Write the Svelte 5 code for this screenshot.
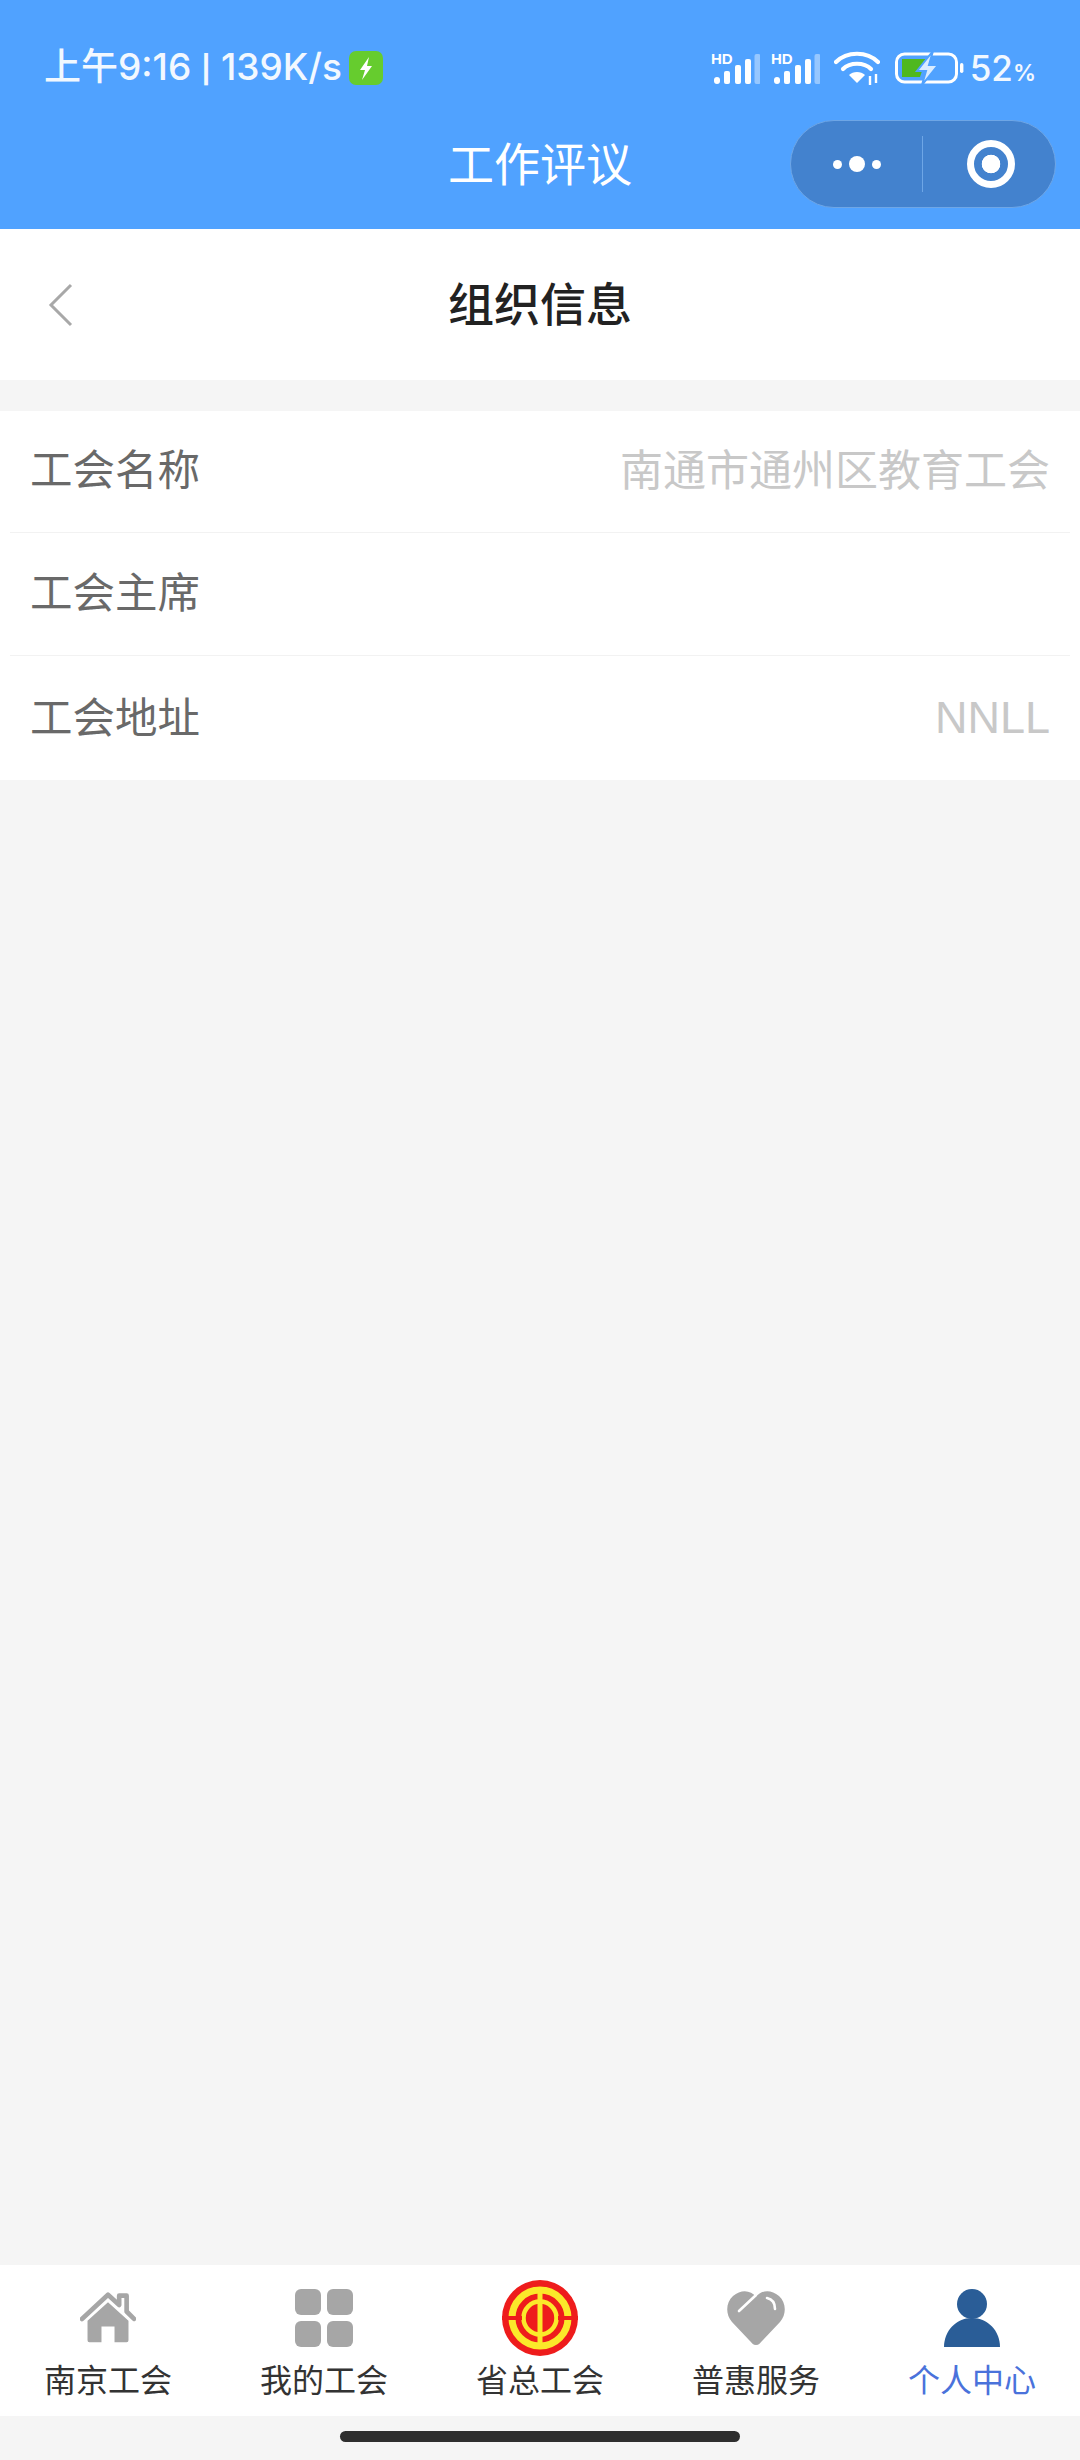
<script>
  const rows = [
    { label: '工会名称', value: '南通市通州区教育工会', latin: false },
    { label: '工会主席', value: '', latin: false },
    { label: '工会地址', value: 'NNLL', latin: true }
  ];
  const tabs = ['南京工会', '我的工会', '省总工会', '普惠服务', '个人中心'];
</script>

<div class="page">
  <header class="head">
    <div class="status">
      <div class="status-left">
        <span class="clock">上午9:16 <span class="pipe">|</span> 139K/s</span>
        <svg class="bolt" width="34" height="34" viewBox="0 0 34 34">
          <rect width="34" height="34" rx="7" fill="#66cc2e"/>
          <path d="M20 6 L11 19 H16 L13 29 L23 15 H18 Z" fill="#fff"/>
        </svg>
      </div>
      <div class="status-right">
        {#each [0, 1] as s}
          <svg class="sig" width="50" height="36" viewBox="0 -2 50 36">
            <text x="1" y="12" class="hd">HD</text>
            <rect x="4" y="25" width="6" height="7" rx="3" fill="#fff"/>
            <rect x="14" y="19" width="6" height="13" rx="2" fill="#fff"/>
            <rect x="25" y="13" width="6" height="19" rx="2" fill="#fff"/>
            <rect x="35" y="7" width="6" height="25" rx="2" fill="#fff"/>
            <rect x="44.5" y="2" width="6" height="30" rx="2" fill="#fff" opacity="0.4"/>
          </svg>
        {/each}
        <svg class="wifi" width="46" height="34" viewBox="0 0 46 34">
          <g fill="none" stroke="#fff" stroke-width="4.2" stroke-linecap="round">
            <path d="M2 11 C13 0 33 0 44 11"/>
            <path d="M9 18 C16 11 30 11 37 18"/>
          </g>
          <path d="M15 24 C19 20 27 20 31 24 L23 32 Z" fill="#fff"/>
          <path d="M36 34 V25 M42 23 V32" stroke="#fff" stroke-width="2.4"/>
        </svg>
        <svg class="batt" width="70" height="34" viewBox="0 0 70 34">
          <rect x="1.5" y="3" width="60" height="28" rx="8" fill="none" stroke="#fff" stroke-width="3"/>
          <path d="M7 8 H31 L25 26 H7 Z" fill="#4fb81f"/>
          <path d="M38 0 L22 20 H31 L27 34 L43 14 H34 Z" fill="#d9ecff" stroke="#50a2ff" stroke-width="2"/>
          <rect x="65" y="12" width="3.4" height="10" rx="1.7" fill="#fff"/>
        </svg>
        <span class="pct">52<small>%</small></span>
      </div>
    </div>
    <div class="titlebar">
      <h1 class="wx-title">工作评议</h1>
      <div class="capsule">
        <div class="dots"><i></i><b></b><i></i></div>
        <span class="cap-div"></span>
        <div class="ring"></div>
      </div>
    </div>
  </header>

  <nav class="nav">
    <svg class="chev" width="26" height="44" viewBox="0 0 26 44">
      <path d="M23 2 L3 22 L23 42" fill="none" stroke="#a8a8a8" stroke-width="3"/>
    </svg>
    <h2>组织信息</h2>
  </nav>

  <section class="list">
    {#each rows as r}
      <div class="row">
        <span class="label">{r.label}</span>
        <span class="value" class:latin={r.latin}>{r.value}</span>
      </div>
    {/each}
  </section>

  <div class="spacer"></div>

  <footer class="tabs">
    {#each tabs as t, i}
      <div class="tab" class:on={i === 4}>
        <div class="ic">
          {#if i === 0}
            <svg width="56" height="54" viewBox="0 0 60 58">
              <path d="M2 30 L30 4 L42 15 V5 H50 V22 L58 30" fill="none" stroke="#a6a6a6" stroke-width="5" stroke-linejoin="round" stroke-linecap="round"/>
              <path d="M30 12 L52 32 V53 a2 2 0 0 1 -2 2 H37 V38 H23 V55 H10 a2 2 0 0 1 -2 -2 V32 Z" fill="#a6a6a6"/>
            </svg>
          {:else if i === 1}
            <svg width="58" height="58" viewBox="0 0 58 58">
              <rect x="0" y="0" width="26" height="26" rx="6" fill="#a6a6a6"/>
              <rect x="32" y="0" width="26" height="26" rx="6" fill="#a6a6a6"/>
              <rect x="0" y="32" width="26" height="26" rx="6" fill="#a6a6a6"/>
              <rect x="32" y="32" width="26" height="26" rx="6" fill="#a6a6a6"/>
            </svg>
          {:else if i === 2}
            <svg width="76" height="76" viewBox="0 0 76 76">
              <circle cx="38" cy="38" r="38" fill="#ee1c1c"/>
              <g fill="none" stroke="#fbe92a">
                <circle cx="38" cy="38" r="28" stroke-width="7"/>
                <circle cx="38" cy="38" r="16.5" stroke-width="4.5"/>
              </g>
              <path d="M0 36 H20 V40 H0 Z M56 36 H76 V40 H56 Z" fill="#ee1c1c"/>
              <rect x="35.5" y="7" width="5" height="62" fill="#fbe92a"/>
            </svg>
          {:else if i === 3}
            <svg width="58" height="54" viewBox="0 0 58 54">
              <path d="M29 54 C26 54 25 52 22 49 L5 31 C-2 23 -1 11 6 5 C14 -2 24 -1 29 6 C34 -1 44 -2 52 5 C59 11 60 23 53 31 L36 49 C33 52 32 54 29 54 Z" fill="#a6a6a6"/>
              <path d="M12 20 L28 5" stroke="#fff" stroke-width="2.6" stroke-linecap="round"/>
              <path d="M40 7 C45 8 48 12 48 18" fill="none" stroke="#fff" stroke-width="2.6" stroke-linecap="round"/>
            </svg>
          {:else}
            <svg width="56" height="58" viewBox="0 0 56 58">
              <circle cx="28" cy="15" r="15" fill="#2a5d97"/>
              <path d="M0 58 C0 42 12 29 28 29 C44 29 56 42 56 58 Z" fill="#2a5d97"/>
            </svg>
          {/if}
        </div>
        <span class="tab-label">{t}</span>
      </div>
    {/each}
  </footer>

  <div class="home-area"><span class="home"></span></div>
</div>

<style>
  :global(body) {
    margin: 0;
    background: #f5f5f5;
    font-family: "Noto Sans CJK SC", "Noto Sans", sans-serif;
  }
  .page {
    width: 1080px;
    height: 2460px;
    display: flex;
    flex-direction: column;
    background: #f5f5f5;
    overflow: hidden;
  }
  .head {
    height: 229px;
    background: #50a2ff;
    color: #fff;
    display: flex;
    flex-direction: column;
  }
  .status {
    height: 121px;
    box-sizing: border-box;
    padding: 46px 44px 0 44px;
    display: flex;
    justify-content: space-between;
    align-items: flex-start;
  }
  .status-left {
    display: flex;
    align-items: center;
    gap: 7px;
    height: 44px;
  }
  .clock {
    font-family: Inter, "Noto Sans CJK SC", sans-serif;
    font-size: 37px;
    font-weight: 500;
    line-height: 44px;
    color: #f2f8ff;
  }
  .pipe {
    font-size: 27px;
    font-weight: 700;
    vertical-align: 1px;
  }
  .status-right {
    display: flex;
    align-items: center;
    height: 44px;
  }
  .sig + .sig { margin-left: 10px; }
  .hd {
    font-family: "Liberation Sans", sans-serif;
    font-size: 15px;
    font-weight: 700;
    fill: #fff;
  }
  .wifi { margin-left: 14px; }
  .batt { margin-left: 15px; }
  .pct {
    font-family: Inter, sans-serif;
    font-size: 35px;
    font-weight: 500;
    line-height: 44px;
    color: #f2f8ff;
    margin-left: 5px;
    padding-top: 5px;
  }
  .pct small { font-size: 23px; font-weight: 600; }
  .titlebar {
    position: relative;
    flex: 1;
    display: flex;
    align-items: flex-start;
    justify-content: center;
  }
  .wx-title {
    margin: 7px 0 0 0;
    font-size: 46px;
    line-height: 66px;
    font-weight: 400;
  }
  .capsule {
    position: absolute;
    top: -1px;
    right: 24px;
    width: 266px;
    height: 88px;
    box-sizing: border-box;
    border: 1px solid #6ea6e6;
    border-radius: 44px;
    background: #4382ce;
    display: flex;
    align-items: center;
  }
  .dots {
    width: 131px;
    display: flex;
    justify-content: center;
    align-items: center;
    gap: 7px;
  }
  .dots i { width: 9px; height: 9px; border-radius: 50%; background: #fff; }
  .dots b { width: 16px; height: 16px; border-radius: 50%; background: #fff; }
  .cap-div { width: 1px; height: 56px; background: #6ea6e6; }
  .ring {
    width: 48px;
    height: 48px;
    box-sizing: border-box;
    margin-left: 44px;
    border: 7px solid #fff;
    border-radius: 50%;
    background: radial-gradient(circle, #fff 0, #fff 9px, transparent 9.6px);
  }
  .nav {
    position: relative;
    height: 151px;
    box-sizing: border-box;
    padding-bottom: 7px;
    background: #fff;
    display: flex;
    align-items: center;
    justify-content: center;
  }
  .nav h2 {
    margin: 0;
    font-size: 46px;
    font-weight: 500;
    color: #222;
    line-height: 66px;
  }
  .chev { position: absolute; left: 48px; top: 54px; }
  .list {
    margin-top: 31px;
    background: #fff;
    box-sizing: border-box;
    height: 369px;
    padding: 0 10px;
  }
  .row {
    height: 122px;
    box-sizing: border-box;
    border-bottom: 1px solid #f2f2f2;
    padding: 0 20px 10px 20px;
    display: flex;
    justify-content: space-between;
    align-items: center;
    font-size: 42.5px;
  }
  .row:nth-child(2) { height: 123px; }
  .row:last-child { border-bottom: 0; height: 124px; padding-bottom: 7px; }
  .label { color: #696969; }
  .value {
    color: #c8c8c8;
    font-size: 43px;
  }
  .value.latin {
    font-family: "Liberation Sans", sans-serif;
    font-size: 45px;
    padding-top: 6px;
  }
  .spacer { flex: 1; }
  .tabs {
    height: 151px;
    background: #fff;
    display: flex;
  }
  .tab {
    flex: 1;
    display: flex;
    flex-direction: column;
    align-items: center;
  }
  .ic {
    height: 106px;
    flex: none;
    display: flex;
    align-items: center;
    justify-content: center;
  }
  .tab-label {
    margin-top: -13px;
    font-size: 32px;
    line-height: 40px;
    color: #333;
  }
  .tab.on .tab-label { color: #4a72db; }
  .home-area {
    height: 44px;
    display: flex;
    justify-content: center;
    padding-top: 15px;
    box-sizing: border-box;
  }
  .home {
    width: 400px;
    height: 11px;
    border-radius: 6px;
    background: #2e2e2e;
  }
</style>
